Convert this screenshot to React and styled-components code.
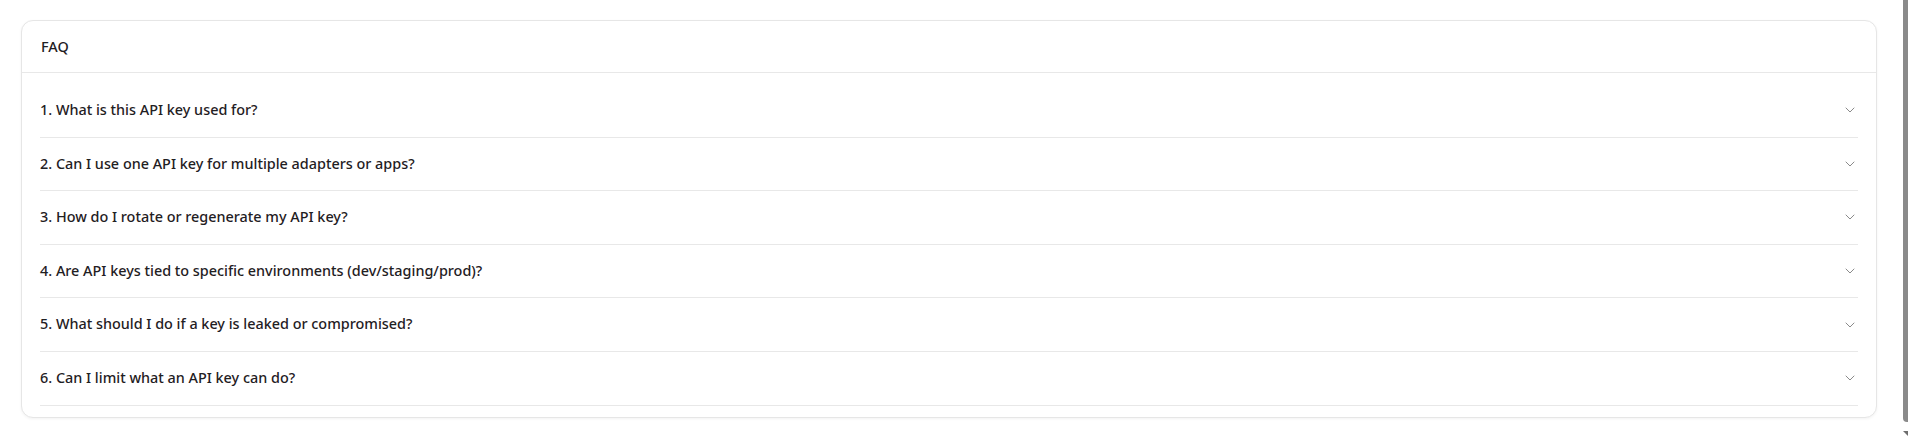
import React from "react";
import styled, { createGlobalStyle } from "styled-components";
import { ChevronDown } from "lucide-react";

const GlobalStyle = createGlobalStyle`
  html, body {
    overflow: hidden;
  }
  body {
    margin: 0;
    background: #ffffff;
    font-family: "Noto Sans", "Open Sans", sans-serif;
    color: #1f2023;
  }
`;

const Page = styled.div`
  padding: 20px 31px 12px 21px;
`;

const Card = styled.section`
  border: 1px solid #e6e6e6;
  border-radius: 12px;
  background: #ffffff;
  box-shadow: 0 1px 3px rgba(0, 0, 0, 0.05);
  overflow: hidden;
`;

const CardHeader = styled.header`
  height: 51px;
  display: flex;
  align-items: center;
  padding: 0 19px;
  border-bottom: 1px solid #e8e8e8;
  font-size: 14.4px;
  font-weight: 500;
`;

const List = styled.div`
  padding: 11px 18px;
`;

const Item = styled.button`
  all: unset;
  box-sizing: border-box;
  width: 100%;
  display: flex;
  align-items: center;
  justify-content: space-between;
  padding: 16px 0;
  line-height: 20.6px;
  border-bottom: 1px solid #e8e8e8;
  font-family: "Noto Sans", "Open Sans", sans-serif;
  font-size: 14.4px;
  font-weight: 500;
  color: #1f2023;
  cursor: pointer;
`;

const Chevron = styled(ChevronDown)`
  flex: none;
  color: #8a8a8a;
`;

/* Window scrollbar shown at the right edge of the screenshot */
const ScrollBar = styled.div`
  position: fixed;
  top: 0;
  right: 0;
  bottom: 0;
  width: 5px;
  display: flex;
  flex-direction: column;
  gap: 9px;
`;

const ScrollThumb = styled.div`
  height: 422px;
  background: #8a8a8a;
  border-bottom-left-radius: 4px;
`;

const ScrollArrow = styled.div`
  width: 0;
  height: 0;
  border-left: 5px solid transparent;
  border-top: 5px solid #6e6e6e;
`;

const questions = [
  "1. What is this API key used for?",
  "2. Can I use one API key for multiple adapters or apps?",
  "3. How do I rotate or regenerate my API key?",
  "4. Are API keys tied to specific environments (dev/staging/prod)?",
  "5. What should I do if a key is leaked or compromised?",
  "6. Can I limit what an API key can do?",
];

export default function App() {
  return (
    <>
      <GlobalStyle />
      <Page>
        <Card>
          <CardHeader>FAQ</CardHeader>
          <List>
            {questions.map((q) => (
              <Item key={q} type="button">
                <span>{q}</span>
                <Chevron size={16} strokeWidth={1.5} />
              </Item>
            ))}
          </List>
        </Card>
      </Page>
      <ScrollBar aria-hidden="true">
        <ScrollThumb />
        <ScrollArrow />
      </ScrollBar>
    </>
  );
}
